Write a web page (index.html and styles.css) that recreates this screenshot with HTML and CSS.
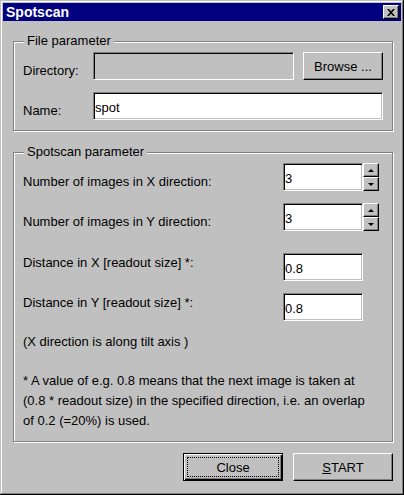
FILE: index.html
```html
<!DOCTYPE html>
<html lang="en">
<head>
  <meta charset="UTF-8" />
  <title>Spotscan</title>
  <link rel="stylesheet" href="styles.css">
</head>
<body>
  <div class="window">
    <div class="titlebar">
      <span class="title">Spotscan</span>
      <button class="title-close" aria-label="Close">
        <svg width="8" height="7" viewBox="0 0 8 7">
          <path d="M0 0h2l2 2.2L6 0h2L5 3.5 8 7H6L4 4.8 2 7H0l3-3.5z" fill="#000"/>
        </svg>
      </button>
    </div>

    <div class="content">
      <div class="group">
        <div class="group-title">File parameter</div>
        <div class="row row-first">
          <label class="label label-file label-low">Directory:</label>
          <input class="field field-dir" disabled>
          <button class="btn btn-browse">Browse ...</button>
        </div>
        <div class="row">
          <label class="label label-file label-low">Name:</label>
          <input class="field field-name" value="spot">
        </div>
      </div>

      <div class="group group-scan">
        <div class="group-title">Spotscan parameter</div>
        <div class="row row-first">
          <label class="label label-scan label-low">Number of images in X direction:</label>
          <input class="field field-num" value="3">
          <div class="spin">
            <button class="spin-btn"><span class="arrow-up"></span></button>
            <button class="spin-btn"><span class="arrow-down"></span></button>
          </div>
        </div>
        <div class="row">
          <label class="label label-scan label-low">Number of images in Y direction:</label>
          <input class="field field-num" value="3">
          <div class="spin">
            <button class="spin-btn"><span class="arrow-up"></span></button>
            <button class="spin-btn"><span class="arrow-down"></span></button>
          </div>
        </div>
        <div class="row row-wide">
          <label class="label label-scan label-high">Distance in X [readout size] *:</label>
          <input class="field field-num" value="0.8">
        </div>
        <div class="row">
          <label class="label label-scan label-high">Distance in Y [readout size] *:</label>
          <input class="field field-num" value="0.8">
        </div>
        <p class="note">(X direction is along tilt axis )</p>
        <p class="footnote">* A value of e.g. 0.8 means that the next image is taken at<br>(0.8 * readout size) in the specified direction, i.e. an overlap<br>of 0.2 (=20%) is used.</p>
      </div>

      <div class="actions">
        <button class="btn btn-action btn-default"><span class="focus">Close</span></button>
        <button class="btn btn-action"><u>S</u>TART</button>
      </div>
    </div>
  </div>
</body>
</html>
```

FILE: styles.css
```css
* {
  margin: 0;
  padding: 0;
  box-sizing: border-box;
}
html, body {
  width: 100%;
  height: 100%;
  overflow: hidden;
  background: #c0c0c0;
  font-family: "Liberation Sans", Arial, sans-serif;
  font-size: 13px;
  color: #000;
}

.window {
  width: 404px;
  height: 495px;
  padding: 3px;
  background: #c0c0c0;
  box-shadow: inset -1px -1px #000, inset 1px 1px #c0c0c0,
              inset -2px -2px #808080, inset 2px 2px #fff;
}

.titlebar {
  height: 18px;
  display: flex;
  align-items: center;
  justify-content: space-between;
  padding: 0 2px 0 3px;
  background: #000080;
  color: #fff;
}
.title {
  font-size: 14px;
  font-weight: bold;
  line-height: 18px;
}
.title-close {
  width: 16px;
  height: 14px;
  display: flex;
  align-items: center;
  justify-content: center;
  background: #c0c0c0;
  border: 1px solid;
  border-color: #fff #000 #000 #fff;
  box-shadow: inset -1px -1px #808080;
}

.content {
  padding: 20px 8px 0 10px;
}

.group {
  display: flex;
  flex-direction: column;
  padding: 0 9px 10px 9px;
  border: 1px solid #808080;
  box-shadow: inset 1px 1px #fff, 1px 1px #fff;
}
.group-scan {
  margin-top: 21px;
}
.group-title {
  align-self: flex-start;
  margin: -9px 0 0 1px;
  padding: 0 3px;
  line-height: 16px;
  background: #c0c0c0;
}

.row {
  display: flex;
  height: 28px;
  margin-top: 12px;
}
.row-first {
  margin-top: 3px;
}
.row-wide {
  margin-top: 22px;
}

.label {
  line-height: 16px;
  white-space: nowrap;
}
.label-file {
  width: 70px;
}
.label-scan {
  width: 260px;
}
.label-low {
  align-self: flex-end;
  margin-bottom: 1px;
}
.label-high {
  align-self: flex-start;
  margin-top: 2px;
}

.field {
  height: 28px;
  padding: 2px 1px 0;
  font: inherit;
  line-height: 16px;
  color: #000;
  background: #fff;
  border: 1px solid;
  border-color: #808080 #fff #fff #808080;
  box-shadow: inset 1px 1px #000, inset -1px -1px #c0c0c0;
  outline: none;
}
.field-dir {
  width: 201px;
  background: #c0c0c0;
}
.field-name {
  width: 290px;
}
.field-num {
  width: 80px;
}

.spin {
  display: flex;
  flex-direction: column;
  width: 16px;
  height: 28px;
}
.spin-btn {
  flex: 1;
  display: flex;
  align-items: center;
  justify-content: center;
  background: #c0c0c0;
  border: 1px solid;
  border-color: #fff #000 #000 #fff;
  box-shadow: inset -1px -1px #808080;
}
.arrow-up {
  width: 0;
  height: 0;
  border-left: 3px solid transparent;
  border-right: 3px solid transparent;
  border-bottom: 3px solid #000;
}
.arrow-down {
  width: 0;
  height: 0;
  border-left: 3px solid transparent;
  border-right: 3px solid transparent;
  border-top: 3px solid #000;
}

.btn {
  font: inherit;
  color: #000;
  background: #c0c0c0;
  border: 1px solid;
  border-color: #fff #000 #000 #fff;
  box-shadow: inset -1px -1px #808080;
}
.btn-browse {
  width: 80px;
  height: 28px;
  margin-left: 9px;
}

.note {
  margin-top: 13px;
  line-height: 16px;
}
.footnote {
  margin-top: 21px;
  line-height: 20px;
  white-space: nowrap;
}

.actions {
  display: flex;
  justify-content: flex-end;
  gap: 10px;
  margin-top: 11px;
}
.btn-action {
  width: 100px;
  height: 28px;
}
.btn-default {
  display: flex;
  padding: 3px;
  border-color: #000;
  box-shadow: inset 1px 1px #fff, inset -1px -1px #000, inset -2px -2px #808080;
}
.focus {
  flex: 1;
  display: flex;
  align-items: center;
  justify-content: center;
  border: 1px dotted #000;
}
```
